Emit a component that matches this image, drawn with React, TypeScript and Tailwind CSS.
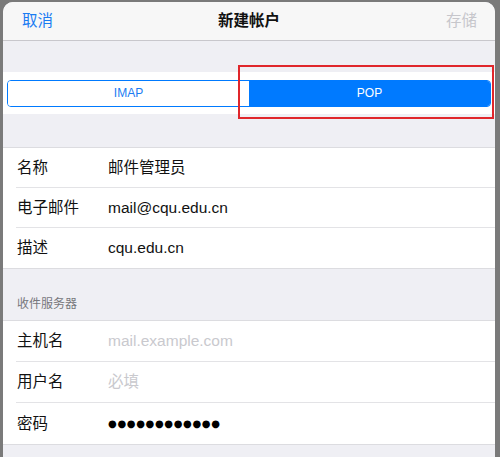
import React from "react";

const font = { fontFamily: '"Liberation Sans", "Noto Sans CJK SC", sans-serif' };

function Row({ label, value, placeholder, last, tall, children }: { label: string; value?: string; placeholder?: string; last?: boolean; tall?: boolean; children?: React.ReactNode }) {
  return (
    <div className={`flex items-center ${tall ? "h-[41px]" : "h-[40px]"} ${last ? "" : "border-b border-[#e3e3e6]"}`}>
      <div className="w-[92px] pl-[1px] text-[15.5px] text-[#111]">{label}</div>
      {children ? children : value ? (
        <div className="text-[15.5px] text-[#111]">{value}</div>
      ) : (
        <div className="text-[15.5px] text-[#c9c9ce]">{placeholder}</div>
      )}
    </div>
  );
}

export default function App() {
  return (
    <div className="w-[500px] h-[457px] bg-[#7a7a7a] pt-[2px] pl-[3px] pr-[5px] overflow-hidden relative" style={font}>
      <div className="h-full rounded-t-[10px] bg-[#efeff4] overflow-hidden flex flex-col">
        <div className="h-[39px] shrink-0 bg-[#f7f7f7] border-b border-[#c8c7cc] grid grid-cols-[1fr_auto_1fr] items-center px-[18px]">
          <div className="pl-[1px] text-[15.5px] text-[#1a7cf2]">取消</div>
          <div className="text-[15.5px] font-bold text-[#111]">新建帐户</div>
          <div className="text-right text-[15.5px] text-[#c6c6cb]">存储</div>
        </div>
        <div className="h-[31px] shrink-0" />
        <div className="h-[42px] shrink-0 bg-white flex items-center px-[4px]">
          <div className="flex-1 h-[27px] flex rounded-[4px] border border-[#007aff] overflow-hidden">
            <div className="flex-1 flex items-center justify-center text-[12px] text-[#1a7cf2] bg-white">IMAP</div>
            <div className="flex-1 flex items-center justify-center text-[12px] text-white bg-[#007aff]">POP</div>
          </div>
        </div>
        <div className="h-[33px] shrink-0" />
        <div className="shrink-0 bg-white border-t border-b border-[#dcdce0] pl-[13px]">
          <Row label="名称" value="邮件管理员" />
          <Row label="电子邮件" value="mail@cqu.edu.cn" />
          <Row label="描述" value="cqu.edu.cn" last />
        </div>
        <div className="h-[51px] shrink-0 flex items-end pl-[14px] pb-[7px] text-[12px] text-[#77777c]">收件服务器</div>
        <div className="shrink-0 bg-white border-t border-b border-[#dcdce0] pl-[13px]">
          <Row label="主机名" placeholder="mail.example.com" tall />
          <Row label="用户名" placeholder="必填" tall />
          <Row label="密码" last tall>
            <div className="text-[10px] tracking-[0.65px] text-black" style={{ fontFamily: '"DejaVu Sans", sans-serif' }}>●●●●●●●●●●●●</div>
          </Row>
        </div>
      </div>
      <div className="absolute left-[238px] top-[65px] w-[256px] h-[54px] border-2 border-[#e0262b]" />
    </div>
  );
}
